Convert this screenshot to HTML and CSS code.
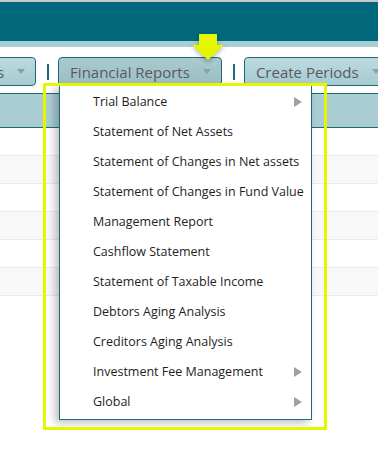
FILE: index.html
```html
<!DOCTYPE html>
<html lang="en">
<head>
    <meta charset="UTF-8">
    <meta name="viewport" content="width=device-width, initial-scale=1.0">
    <title>Financial Reports</title>
    <link rel="stylesheet" href="styles.css">
</head>
<body>

<div class="topbar"></div>
<div class="subbar"></div>

<nav class="toolbar">
    <button class="tab first">Transactions <span class="caret"></span></button>
    <span class="sep"></span>
    <button class="tab active">Financial Reports <span class="caret"></span></button>
    <span class="sep"></span>
    <button class="tab">Create Periods <span class="caret"></span></button>
</nav>

<div class="grid">
    <div class="grid-head"></div>
    <div class="grid-row"></div>
    <div class="grid-row"></div>
    <div class="grid-row"></div>
    <div class="grid-row"></div>
    <div class="grid-row"></div>
    <div class="grid-row"></div>
</div>

<ul class="menu">
    <li class="has-sub">Trial Balance</li>
    <li>Statement of Net Assets</li>
    <li>Statement of Changes in Net assets</li>
    <li>Statement of Changes in Fund Value</li>
    <li>Management Report</li>
    <li>Cashflow Statement</li>
    <li>Statement of Taxable Income</li>
    <li>Debtors Aging Analysis</li>
    <li>Creditors Aging Analysis</li>
    <li class="has-sub">Investment Fee Management</li>
    <li class="has-sub">Global</li>
</ul>

<div class="highlight"></div>
<svg class="pointer" width="36" height="30" viewBox="0 0 36 30">
    <polygon points="9,0 27,0 27,11 34,11 18,26 2,11 9,11" fill="#e4f700"/>
</svg>

</body>
</html>
```

FILE: styles.css
```css
body {
    font-family: 'Open Sans', sans-serif;
    margin: 0;
    padding: 0;
    background: white;
    overflow: hidden;
    position: relative;
    height: 455px;
}

.topbar {
    height: 39px;
    background: #00687a;
    border-top: 2px solid #c9c9c9;
}

.subbar {
    height: 6px;
    background: #a8cdd3;
}

.toolbar {
    display: flex;
    align-items: center;
    margin-left: -97px;
    padding-top: 10px;
    white-space: nowrap;
}

.tab {
    font-family: 'Open Sans', sans-serif;
    font-size: 15px;
    color: #5a5a5a;
    height: 29px;
    padding: 0 10px 0 11px;
    border: 1px solid #1f6a78;
    border-radius: 4px;
    background: linear-gradient(#bcdade, #a5cbd1);
    display: flex;
    align-items: center;
    gap: 13px;
    flex-shrink: 0;
}

.tab.active {
    background: linear-gradient(#a9c9ce, #9bbfc5);
}

.caret {
    width: 0;
    height: 0;
    border-top: 5px solid #8e9ea2;
    border-left: 4px solid transparent;
    border-right: 4px solid transparent;
}

.sep {
    width: 2px;
    height: 16px;
    margin: 0 9px 0 11px;
    background: #1f6a78;
    flex-shrink: 0;
}

.grid {
    margin-top: 7px;
}

.grid-head {
    height: 33px;
    background: #a9cdd3;
    border-top: 1px solid #1f6a78;
    border-bottom: 1px solid #1f6a78;
}

.grid-row {
    height: 27px;
    border-bottom: 1px solid #eaeaea;
}

.grid-row:nth-child(odd) {
    background: #f8f8f8;
}

.menu {
    position: absolute;
    left: 59px;
    top: 85px;
    width: 251px;
    margin: 0;
    padding: 1px 0 2px;
    list-style: none;
    background: white;
    border: 1px solid #1f6a78;
    box-shadow: -4px 3px 8px rgba(0, 0, 0, 0.25);
}

.menu li {
    position: relative;
    height: 30px;
    line-height: 30px;
    padding-left: 33px;
    font-size: 12.5px;
    color: #1e1e1e;
    white-space: nowrap;
}

.menu li.has-sub::after {
    content: "";
    position: absolute;
    right: 9px;
    top: 10px;
    border-left: 8px solid #a0a0a0;
    border-top: 5px solid transparent;
    border-bottom: 5px solid transparent;
}

.highlight {
    position: absolute;
    left: 43px;
    top: 83px;
    width: 278px;
    height: 341px;
    border: 3px solid #e4f700;
}

.pointer {
    position: absolute;
    left: 190px;
    top: 34px;
    filter: drop-shadow(0 2px 2px rgba(0, 0, 0, 0.3));
}
```
